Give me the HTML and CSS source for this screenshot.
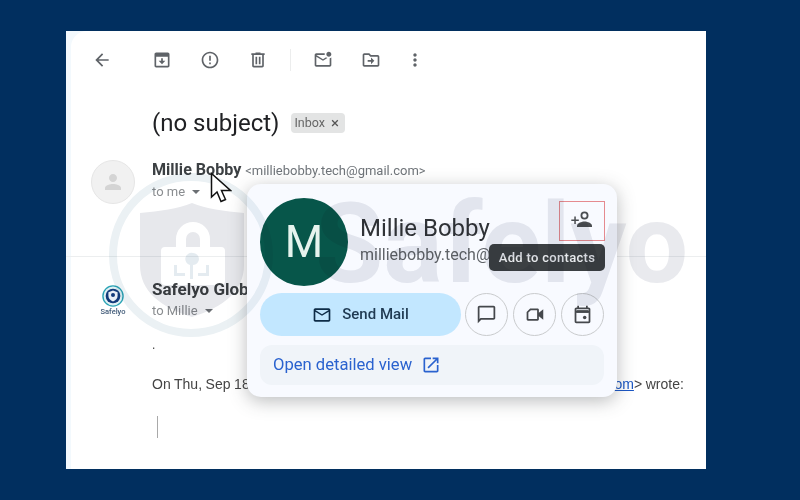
FILE: index.html
```html
<!DOCTYPE html>
<html lang="en">
<head>
<meta charset="utf-8">
<title>Gmail contact card</title>
<link rel="stylesheet" href="styles.css">
</head>
<body>
<main class="sheet">
  <div class="toolbar">
    <svg class="tool tool-back" viewBox="0 0 24 24"><path d="M20 11H7.83l5.59-5.59L12 4l-8 8 8 8 1.41-1.41L7.83 13H20v-2z"/></svg>
    <svg class="tool" viewBox="0 0 24 24"><path fill-rule="evenodd" d="M19 3H5c-1.1 0-2 .9-2 2v14c0 1.1.9 2 2 2h14c1.1 0 2-.9 2-2V5c0-1.1-.9-2-2-2zm0 16H5V8h14v11zM13 10h-2v3H8l4 4 4-4h-3z"/></svg>
    <svg class="tool" viewBox="0 0 24 24"><path d="M11 15h2v2h-2zm0-8h2v6h-2zm1-5C6.47 2 2 6.48 2 12s4.47 10 10 10 10-4.48 10-10S17.52 2 12 2zm0 18c-4.42 0-8-3.58-8-8s3.58-8 8-8 8 3.58 8 8-3.58 8-8 8z"/></svg>
    <svg class="tool" viewBox="0 0 24 24"><path d="M15 4V3H9v1H4v2h1v13c0 1.1.9 2 2 2h10c1.1 0 2-.9 2-2V6h1V4h-5zm2 15H7V6h10v13zM9 8h2v9H9zm4 0h2v9h-2z"/></svg>
    <span class="tool-sep"></span>
    <svg class="tool" viewBox="0 0 24 24"><path d="M22 8.98V18c0 1.1-.9 2-2 2H4c-1.1 0-2-.9-2-2V6c0-1.1.9-2 2-2h10.1c-.06.32-.1.66-.1 1s.04.68.1 1H4l8 5 3.67-2.29c.47.43 1.02.76 1.63.98L12 13 4 8v10h16V9.9c.74-.15 1.42-.48 2-.92zM16 5c0 1.66 1.34 3 3 3s3-1.34 3-3-1.34-3-3-3-3 1.34-3 3z"/></svg>
    <svg class="tool" viewBox="0 0 24 24"><path d="M20 6h-8l-2-2H4c-1.1 0-2 .9-2 2v12c0 1.1.9 2 2 2h16c1.1 0 2-.9 2-2V8c0-1.1-.9-2-2-2zm0 12H4V6h5.17l2 2H20v10zm-8-4H8v-2h4V9l4 4-4 4v-3z"/></svg>
    <svg class="tool tool-more" viewBox="0 0 24 24"><path d="M12 8c1.1 0 2-.9 2-2s-.9-2-2-2-2 .9-2 2 .9 2 2 2zm0 2c-1.1 0-2 .9-2 2s.9 2 2 2 2-.9 2-2-.9-2-2-2zm0 6c-1.1 0-2 .9-2 2s.9 2 2 2 2-.9 2-2-.9-2-2-2z"/></svg>
  </div>

  <div class="subject-row">
    <h1 class="subject">(no subject)</h1>
    <span class="chip">Inbox <span class="chip-x">×</span></span>
  </div>

  <section class="message message-first">
    <div class="avatar-col">
      <div class="avatar-ghost">
        <svg viewBox="0 0 24 24"><path d="M12 12c2.2 0 4-1.8 4-4s-1.8-4-4-4-4 1.8-4 4 1.8 4 4 4zm0 2c-2.7 0-8 1.3-8 4v2h16v-2c0-2.7-5.300-4-8-4z"/></svg>
      </div>
    </div>
    <div class="meta">
      <div class="from"><b>Millie Bobby</b> <span class="addr">&lt;milliebobby.tech@gmail.com&gt;</span></div>
      <div class="to">to me <span class="caret"></span></div>
    </div>
  </section>

  <section class="message message-second">
    <div class="avatar-col">
      <div class="brand">
        <svg class="brand-mark" viewBox="0 0 24 24">
          <circle cx="12" cy="12" r="11" fill="#dff1f4" stroke="#2aa3b5" stroke-width="1.500"/>
          <circle cx="12" cy="12" r="8" fill="#123a7a"/>
          <path d="M12 6l5 1.800v4c0 3-2 5-5 6.200-3-1.200-5-3.200-5-6.200v-4z" fill="#e8eef6"/>
          <circle cx="12" cy="11" r="2.200" fill="#123a7a"/>
        </svg>
        <span class="brand-name">Safelyo</span>
      </div>
    </div>
    <div class="meta">
      <div class="from from-wide"><b>Safelyo Global</b></div>
      <div class="to">to Millie <span class="caret"></span></div>
      <p class="dot">.</p>
      <p class="quote-head">On Thu, Sep 18, 2025 at 10:12 AM Millie Bobby &lt;<a href="#">milliebobby.tech@gmail.com</a>&gt; wrote:</p>
      <div class="quote-bar"></div>
    </div>
  </section>

  <aside class="card">
    <div class="card-head">
      <div class="card-avatar">M</div>
      <div class="card-id">
        <div class="card-name">Millie Bobby</div>
        <div class="card-mail">milliebobby.tech@gmail.com</div>
      </div>
      <div class="add-box">
        <svg viewBox="0 0 24 24">
          <circle class="add-head" cx="14.500" cy="7.500" r="3.100"/>
          <path d="M7 19v-1.300c0-2.600 5-4.200 7.500-4.200s7.500 1.600 7.500 4.200V19z"/>
          <path d="M5.800 8.500H4.300v3H1.300V13h3v3h1.500v-3h3v-1.500h-3z"/>
        </svg>
      </div>
    </div>
    <div class="card-actions">
      <div class="send">
        <svg viewBox="0 0 24 24"><path d="M20 4H4c-1.100 0-2 .9-2 2v12c0 1.100.9 2 2 2h16c1.100 0 2-.9 2-2V6c0-1.100-.9-2-2-2zm0 14H4V8l8 5 8-5v10zm-8-7L4 6h16l-8 5z"/></svg>
        <span>Send Mail</span>
      </div>
      <div class="round"><svg viewBox="0 0 24 24"><path d="M20 2H4c-1.100 0-2 .9-2 2v18l4-4h14c1.100 0 2-.9 2-2V4c0-1.100-.9-2-2-2zm0 14H5.170L4 17.170V4h16v12z"/></svg></div>
      <div class="round"><svg viewBox="0 0 24 24"><path d="M7 5h8.500c.8 0 1.500.7 1.500 1.500V10l5-4v12l-5-4v3.500c0 .8-.7 1.500-1.500 1.500h-11C3.700 19 3 18.300 3 17.500V9zm.8 2L5 9.800V17h10V7z"/></svg></div>
      <div class="round"><svg viewBox="0 0 24 24"><path d="M19 4h-1V2h-2v2H8V2H6v2H5c-1.100 0-2 .9-2 2v14c0 1.100.9 2 2 2h14c1.100 0 2-.9 2-2V6c0-1.100-.9-2-2-2zm0 16H5V10h14v10zM5 8V6h14v2z"/><path d="M5 7h14v3H5z"/><circle cx="14.500" cy="15.500" r="2"/></svg></div>
    </div>
    <div class="detail">
      <span>Open detailed view</span>
      <svg viewBox="0 0 24 24"><path d="M19 19H5V5h7V3H5c-1.110 0-2 .9-2 2v14c0 1.100.89 2 2 2h14c1.100 0 2-.9 2-2v-7h-2v7zM14 3v2h3.590l-9.830 9.830 1.410 1.410L19 6.410V10h2V3h-7z"/></svg>
    </div>
    <div class="tooltip">Add to contacts</div>
  </aside>

  <div class="watermark">
    <svg class="wm-mark" viewBox="0 0 164 164">
      <circle class="wm-ring" cx="82" cy="82" r="78"/>
      <path class="wm-shield" fill-rule="evenodd" d="M31 40c20-2 38-4 52-10 14 6 32 8 52 10v52c0 26-20 42-52 52-32-10-52-26-52-52zM67 74V66a17 17 0 0 1 34 0v8h11a4 4 0 0 1 4 4v30a4 4 0 0 1-4 4H56a4 4 0 0 1-4-4V78a4 4 0 0 1 4-4zM77 74h14v-8a7 7 0 0 0-14 0z"/>
      <path class="wm-circuit" d="M84 80a6 6 0 1 1 0 12v14h-3V92a6 6 0 0 1 3-12zM68 92v8h8v3H65V92zM100 92v11H89v-3h8v-8z"/>
    </svg>
    <span class="wm-text">Safelyo</span>
  </div>

  <svg class="cursor" viewBox="0 0 22 31"><path d="M1.500 1.500v23.500l5.500-5 4 9.500 4.500-2-4-9h9z" fill="#fff" stroke="#111" stroke-width="1.500" stroke-linejoin="miter"/></svg>
</main>
</body>
</html>
```

FILE: styles.css
```css
* { box-sizing: border-box; }

html, body { height: 100%; }

body {
  margin: 0;
  padding: 31px 94px 31px 66px;
  background: #012f5f;
  font-family: "Liberation Sans", Arial, sans-serif;
  color: #3c4043;
  overflow: hidden;
}

.sheet {
  position: relative;
  isolation: isolate;
  width: 640px;
  height: 438px;
  background: #f3f9fd;
  overflow: hidden;
  filter: blur(.3px);
}
.sheet::before {
  content: "";
  position: absolute;
  z-index: -1;
  inset: 0 0 0 5px;
  background: #fff;
  border-top-left-radius: 16px;
}

/* Toolbar */
.toolbar {
  display: flex;
  align-items: center;
  height: 58px;
  padding-left: 26px;
}
.tool { width: 20px; height: 20px; fill: #5f6368; flex: none; margin-left: 28px; }
.tool-back { margin-left: 0; margin-right: 12px; }
.tool-sep { width: 1px; height: 22px; background: #eceded; margin: 0 -6px 0 22px; }
.tool.tool-more { margin-left: 24px; }

/* Subject */
.subject-row {
  display: flex;
  align-items: center;
  gap: 12px;
  height: 40px;
  margin-top: 14px;
  padding-left: 86px;
}
.subject {
  margin: 0;
  font: 400 24px/32px Roboto, sans-serif;
  color: #202124;
}
.chip {
  display: inline-flex;
  align-items: center;
  gap: 6px;
  height: 20px;
  padding: 0 6px 0 3px;
  background: #e3e4e4;
  border-radius: 4px;
  font: 400 12.5px/20px Roboto, sans-serif;
  color: #666;
}
.chip-x { font-size: 15px; line-height: 20px; color: #555; }

/* Messages */
.message { display: flex; }
.message-first {
  height: 114px;
  padding-top: 17px;
  border-bottom: 1px solid #eceeef;
}
.message-second { padding-top: 22px; }
.avatar-col { width: 86px; flex: none; display: flex; justify-content: flex-end; padding-right: 17px; }
.avatar-ghost {
  width: 44px;
  height: 44px;
  border-radius: 50%;
  background: #f1f1f1;
  border: 1px solid #e6e6e6;
  display: flex;
  align-items: center;
  justify-content: center;
}
.avatar-ghost svg { width: 24px; height: 24px; fill: #d4d4d4; }
.brand { width: 44px; display: flex; flex-direction: column; align-items: center; padding-top: 6px; }
.brand-mark { width: 22px; height: 22px; }
.brand-name { font: 500 7.5px/10px Roboto, sans-serif; color: #405a78; }

.meta { min-width: 0; flex: 1; }
.from { font-size: 14px; line-height: 20px; white-space: nowrap; }
.from b { font: 700 16.1px/20px Roboto, sans-serif; color: #3c4043; }
.from-wide b { font-size: 17px; }
.addr { font-family: Roboto, sans-serif; font-size: 13px; color: #70757a; }
.to {
  margin-top: 2px;
  font: 400 13px/18px Roboto, sans-serif;
  color: #8a8d90;
}
.caret {
  display: inline-block;
  width: 0;
  height: 0;
  margin-left: 4px;
  vertical-align: 2px;
  border-left: 4px solid transparent;
  border-right: 4px solid transparent;
  border-top: 4px solid #6b6f73;
}
.dot { margin: 17px 0 0; font-size: 12px; line-height: 16px; color: #444; }
.quote-head {
  margin: 22px 0 0;
  font-size: 14px;
  line-height: 18px;
  word-spacing: -.3px;
  color: #444;
  white-space: nowrap;
}
.quote-head a { color: #1a56c4; }
.quote-bar { width: 1px; height: 22px; margin: 23px 0 0 5px; background: #a9a9a9; }

/* Contact card */
.card {
  position: absolute;
  left: 181px;
  top: 153px;
  width: 370px;
  height: 213px;
  padding: 14px 13px;
  background: #f8faff;
  border-radius: 14px;
  box-shadow: 0 4px 18px rgba(60, 64, 67, .35);
}
.card-head { display: flex; height: 87px; }
.card-avatar {
  width: 88px;
  height: 88px;
  flex: none;
  border-radius: 50%;
  background: #07564a;
  color: #e6f4ee;
  font: 400 44px/88px Roboto, sans-serif;
  text-align: center;
}
.card-id { margin-left: 12px; padding-top: 15px; min-width: 0; flex: 1; white-space: nowrap; }
.card-name { font: 400 24px/30px Roboto, sans-serif; color: #303337; }
.card-mail { margin-top: 1px; font: 400 16px/22px Roboto, sans-serif; color: #5f6368; }
.add-box {
  width: 46px;
  height: 40px;
  margin: 3px -1px 0 0;
  padding-bottom: 3px;
  border: 1px solid #e58a8f;
  display: flex;
  align-items: center;
  justify-content: center;
  flex: none;
}
.add-box svg { width: 24px; height: 24px; fill: #4a4d51; }
.add-box .add-head { fill: none; stroke: #4a4d51; stroke-width: 1.800; }
.tooltip {
  position: absolute;
  left: 242px;
  top: 60px;
  width: 116px;
  height: 27px;
  background: #3c4043;
  border-radius: 5px;
  color: #e8eaed;
  font: 500 13px/27px Roboto, sans-serif;
  letter-spacing: .3px;
  text-align: center;
}
.card-actions { display: flex; align-items: center; margin-top: 8px; gap: 5px; }
.send {
  width: 201px;
  height: 43px;
  flex: none;
  margin-right: -1px;
  display: flex;
  align-items: center;
  justify-content: center;
  gap: 10px;
  background: #c2e7ff;
  border-radius: 22px;
  font: 500 15px/43px Roboto, sans-serif;
  color: #1f3a52;
}
.send svg { width: 20px; height: 20px; fill: #0e2c47; }
.round {
  width: 43px;
  height: 43px;
  flex: none;
  border: 1px solid #c9cbcd;
  border-radius: 50%;
  display: flex;
  align-items: center;
  justify-content: center;
}
.round svg { width: 21px; height: 21px; fill: #45484c; }
.detail {
  display: flex;
  align-items: center;
  gap: 9px;
  height: 40px;
  margin-top: 9px;
  padding-left: 13px;
  background: #f0f4f9;
  border-radius: 12px;
  font: 400 16.6px/40px Roboto, sans-serif;
  color: #2a62cf;
}
.detail svg { width: 20px; height: 20px; fill: #2a62cf; }

/* Watermark over the whole capture */
.watermark {
  position: absolute;
  left: 43px;
  top: 142px;
  width: 600px;
  height: 164px;
  pointer-events: none;
  mix-blend-mode: multiply;
}
.wm-mark { position: absolute; left: 0; top: 0; width: 164px; height: 164px; }
.wm-ring { fill: none; stroke: #ebf1f4; stroke-width: 8; }
.wm-shield { fill: #e7e8ec; }
.wm-circuit { fill: #e4ebf0; }
.wm-text {
  position: absolute;
  left: 206px;
  top: 6px;
  font: 700 111px/130px Roboto, sans-serif;
  color: #e9eaee;
  white-space: nowrap;
}

.cursor {
  position: absolute;
  left: 144px;
  top: 141px;
  width: 22px;
  height: 31px;
}
```
